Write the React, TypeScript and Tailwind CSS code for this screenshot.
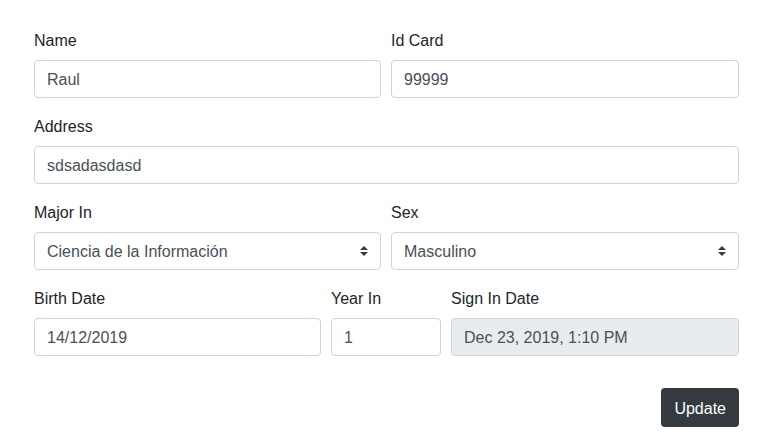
import React from "react";

const font = { fontFamily: '"Segoe UI", "Liberation Sans", Arial, sans-serif' };

function Label({ children }: { children: React.ReactNode }) {
  return <label className="block pt-px mb-[7px] text-base leading-6 text-[#212529]">{children}</label>;
}

function Field({ value, disabled }: { value: string; disabled?: boolean }) {
  return (
    <div
      className={`h-[38px] flex items-center px-3 pt-[2px] border border-[#ced4da] rounded text-base text-[#495057] ${
        disabled ? "bg-[#e9ecef]" : "bg-white"
      }`}
    >
      {value}
    </div>
  );
}

function SelectField({ value }: { value: string }) {
  return (
    <div className="h-[38px] flex items-center justify-between px-3 border border-[#ced4da] rounded bg-white text-base text-[#495057]">
      <span className="pt-[2px]">{value}</span>
      <svg width="8" height="10" viewBox="0 0 4 5">
        <path fill="#343a40" d="M2 0L0 2h4zm0 5L0 3h4z" />
      </svg>
    </div>
  );
}

export default function App() {
  return (
    <div className="w-[766px] h-[446px] bg-white pt-[28px] pl-[34px] pr-[27px]" style={font}>
      <div className="grid grid-cols-[347px_1fr] gap-x-[10px]">
        <div className="mb-4">
          <Label>Name</Label>
          <Field value="Raul" />
        </div>
        <div className="mb-4">
          <Label>Id Card</Label>
          <Field value="99999" />
        </div>
        <div className="col-span-2 mb-4">
          <Label>Address</Label>
          <Field value="sdsadasdasd" />
        </div>
        <div className="mb-4">
          <Label>Major In</Label>
          <SelectField value="Ciencia de la Información" />
        </div>
        <div className="mb-4">
          <Label>Sex</Label>
          <SelectField value="Masculino" />
        </div>
      </div>
      <div className="grid grid-cols-[287px_110px_1fr] gap-x-[10px]">
        <div className="mb-4">
          <Label>Birth Date</Label>
          <Field value="14/12/2019" />
        </div>
        <div className="mb-4">
          <Label>Year In</Label>
          <Field value="1" />
        </div>
        <div className="mb-4">
          <Label>Sign In Date</Label>
          <Field value="Dec 23, 2019, 1:10 PM" disabled />
        </div>
      </div>
      <div className="flex justify-end mt-4">
        <button className="h-[39px] px-[13px] pt-[2px] rounded bg-[#343a40] text-white text-base">Update</button>
      </div>
    </div>
  );
}
